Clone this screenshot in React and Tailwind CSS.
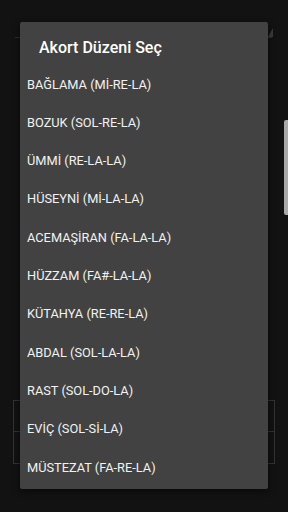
import React from "react";

const items = [
  "BAĞLAMA (Mİ-RE-LA)",
  "BOZUK (SOL-RE-LA)",
  "ÜMMİ (RE-LA-LA)",
  "HÜSEYNİ (Mİ-LA-LA)",
  "ACEMAŞİRAN (FA-LA-LA)",
  "HÜZZAM (FA#-LA-LA)",
  "KÜTAHYA (RE-RE-LA)",
  "ABDAL (SOL-LA-LA)",
  "RAST (SOL-DO-LA)",
  "EVİÇ (SOL-Sİ-LA)",
  "MÜSTEZAT (FA-RE-LA)",
];

export default function App() {
  return (
    <div
      className="relative w-[288px] h-[512px] overflow-hidden bg-[#121212]"
      style={{ fontFamily: "Roboto, 'Noto Sans', sans-serif" }}
    >
      {/* background page */}
      <div className="flex flex-col h-full">
        <div className="relative mt-[28px] ml-[15px] mr-[16px] h-[10px] border-b border-[#2e2e2e]">
          <svg className="absolute right-[-1px] bottom-0" width="5" height="9" viewBox="0 0 5 9">
            <polygon points="5,0 5,9 0,9" fill="#3a3a3a" />
          </svg>
        </div>
        <div className="mt-auto mb-[48px] mx-[13px] border border-[#333] flex flex-col">
          <div className="h-[31px] border-b border-[#333]" />
          <div className="h-[31px]" />
        </div>
      </div>
      {/* scroll handle */}
      <div className="absolute right-0 top-[120px] w-[4px] h-[95px] rounded-l-[2px] bg-[#a9a9a9]" />

      {/* dialog */}
      <div className="absolute left-[20px] top-[22px] w-[248px] h-[467px] rounded-[2px] bg-[#424242] shadow-[0_2px_6px_rgba(0,0,0,0.6)] flex flex-col">
        <div className="h-[43px] pl-[19px] pt-[16px] text-[16px] leading-[20px] font-medium text-white">
          Akort Düzeni Seç
        </div>
        <div className="flex flex-col">
          {items.map((t) => (
            <div
              key={t}
              className="h-[38.3px] flex items-center pl-[7px] text-[12.8px] text-[#f2f2f2]"
            >
              {t}
            </div>
          ))}
        </div>
      </div>
    </div>
  );
}
